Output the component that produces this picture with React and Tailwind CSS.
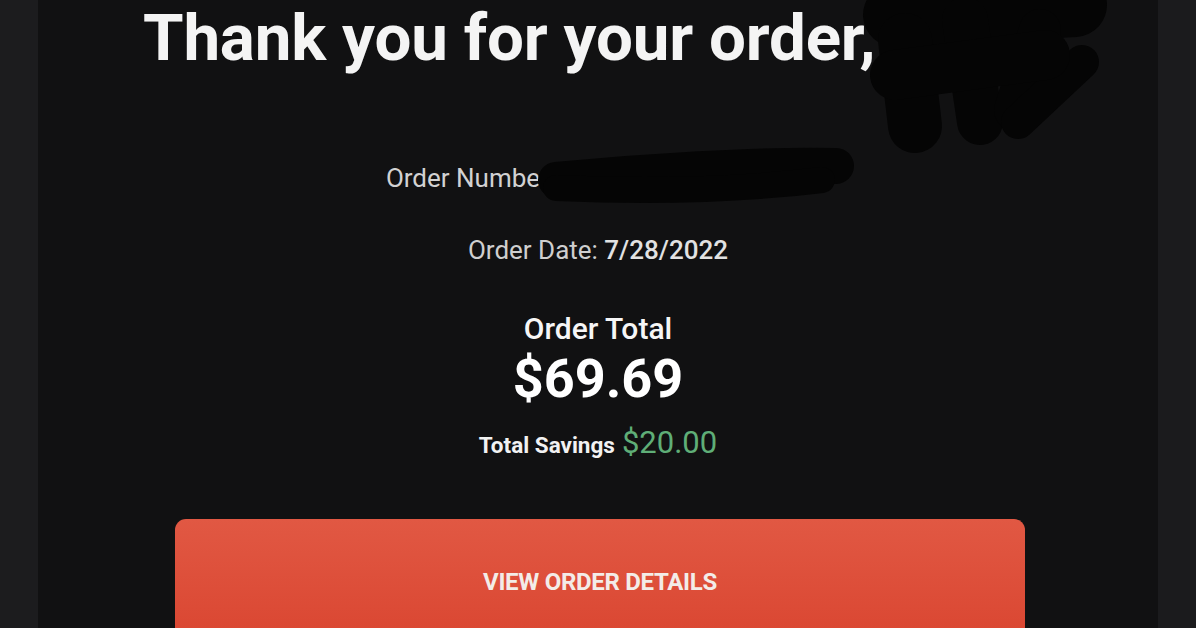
export default function App() {
  const roboto = { fontFamily: 'Roboto, "Noto Sans", sans-serif' };
  return (
    <div className="relative flex h-[628px] w-[1196px] overflow-hidden bg-[#1b1b1d]" style={roboto}>
      <div className="w-[38px] shrink-0 bg-[#1c1c1e]" />
      <main className="flex w-[1120px] shrink-0 flex-col bg-[#111112]">
        <h1 className="mt-[6px] pl-[105px] text-[65.5px] font-bold leading-[64px] tracking-[-0.2px] text-[#f4f4f4]">
          Thank you for your order,
        </h1>

        <p className="mt-[93px] text-center text-[26px] leading-[30px] text-[#d2d2d2]">
          Order Number: 00000000000000000
        </p>

        <p className="mt-[42px] text-center text-[26px] leading-[30px] text-[#cfcfcf]">
          Order Date: <span className="font-medium text-[#e2e2e2]">7/28/2022</span>
        </p>

        <p className="mt-[47px] text-center text-[30px] font-medium leading-[33px] text-[#f6f6f6]">
          Order Total
        </p>
        <p className="mt-[6px] text-center text-[54px] font-bold leading-[56px] text-white">
          $69.69
        </p>

        <div className="mt-[19px] flex items-baseline justify-center gap-[7px]">
          <span className="text-[22.5px] font-bold text-[#f2f2f2]">Total Savings</span>
          <span className="text-[31px] leading-[34px] text-[#5fae77]">$20.00</span>
        </div>

        <button className="ml-[137px] mt-[56px] flex h-[140px] w-[850px] shrink-0 justify-center rounded-[11px] bg-gradient-to-b from-[#e15843] to-[#d9432e] pt-[48px] text-[24px] font-bold leading-[30px] tracking-[-0.3px] text-[#f3ece8]">
          VIEW ORDER DETAILS
        </button>
      </main>
      <div className="flex-1 bg-[#1b1b1d]" />

      {/* marker scribbles covering the name and order number */}
      <svg className="pointer-events-none absolute left-0 top-0" width="1196" height="628" viewBox="0 0 1196 628">
        <g fill="#050505" stroke="#050505" strokeLinecap="round" strokeLinejoin="round">
          <path d="M895 15 L1075 5" strokeWidth="64" fill="none" />
          <path d="M905 40 L915 126" strokeWidth="54" fill="none" />
          <path d="M965 20 L980 122" strokeWidth="46" fill="none" />
          <path d="M1040 30 L1015 110" strokeWidth="42" fill="none" />
          <path d="M1082 62 L1018 122" strokeWidth="34" fill="none" />
          <path d="M895 75 L1045 55" strokeWidth="50" fill="none" />
          <path d="M556 180 C640 172 760 164 836 166" strokeWidth="36" fill="none" />
          <path d="M556 188 C650 192 740 190 822 180" strokeWidth="26" fill="none" />
        </g>
      </svg>
    </div>
  );
}
